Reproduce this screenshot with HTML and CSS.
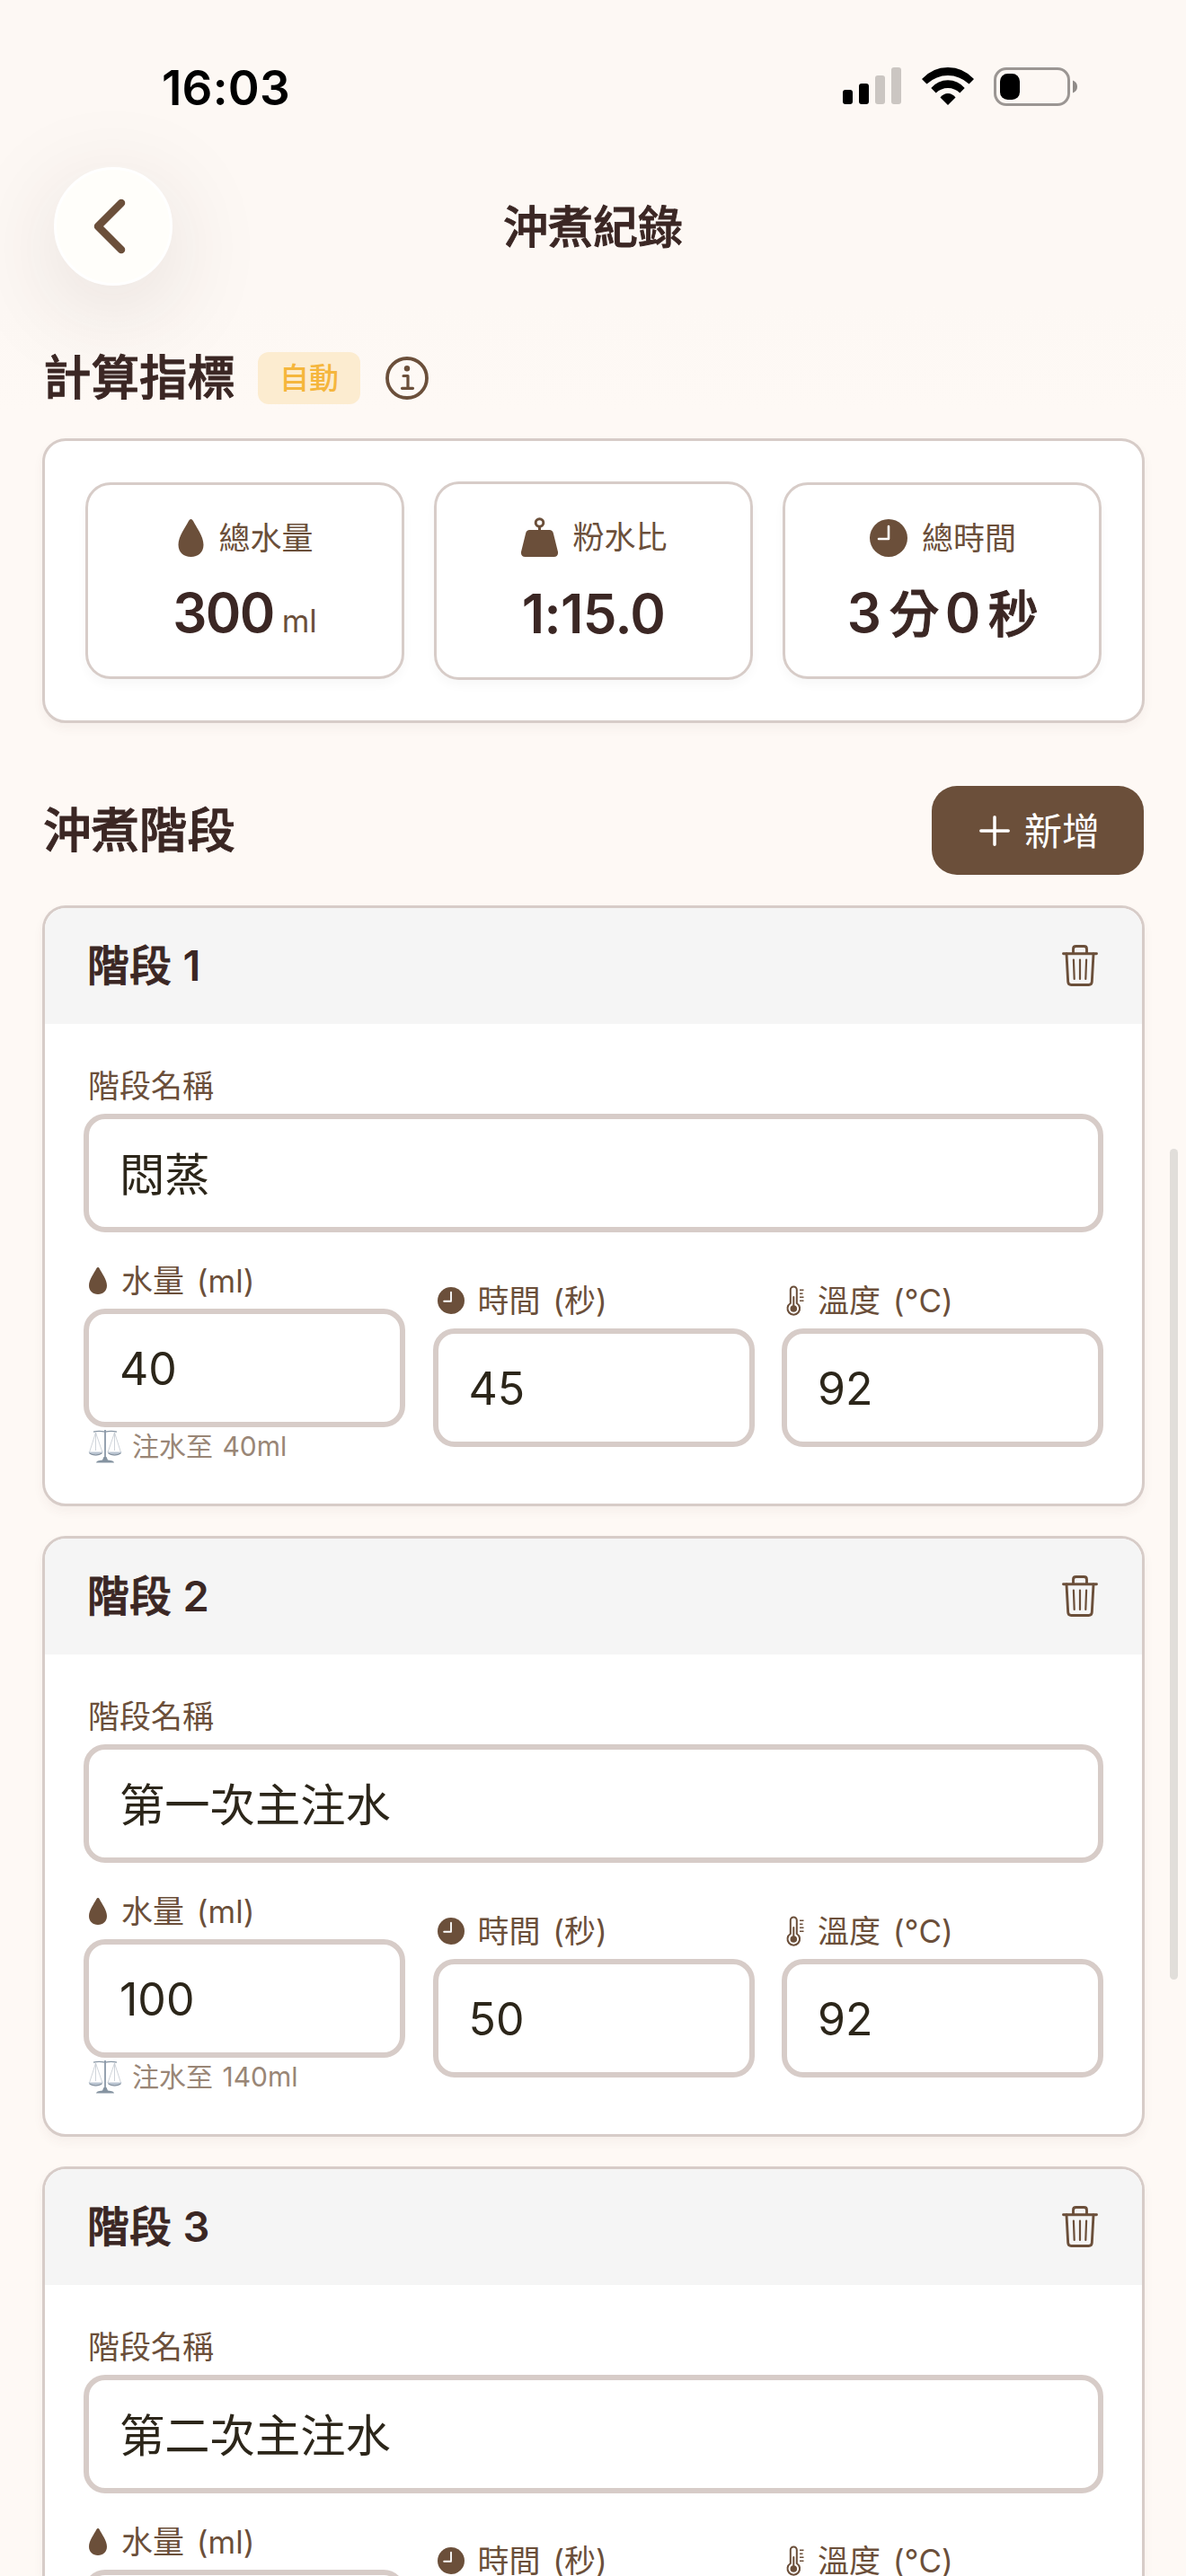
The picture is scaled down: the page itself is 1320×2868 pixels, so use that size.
FILE: index.html
```html
<!DOCTYPE html>
<html lang="zh-Hant">
<head>
    <meta charset="UTF-8">
    <meta name="viewport" content="width=device-width, initial-scale=1.0">
    <title>沖煮紀錄</title>
    <link rel="stylesheet" href="styles.css">
</head>
<body>
    <!-- 共用圖示 -->
    <svg class="sprite" width="0" height="0">
        <symbol id="drop" viewBox="0 0 28 42">
            <path d="M14 0C15 0 15.8 .7 16.5 2C20 9 28 19 28 28.5C28 37 22 42 14 42S0 37 0 28.5C0 19 8 9 11.5 2C12.2 .7 13 0 14 0Z" fill="currentColor"/>
        </symbol>
        <symbol id="weight" viewBox="0 0 41 44">
            <circle cx="20.5" cy="6" r="4.3" fill="none" stroke="currentColor" stroke-width="3"/>
            <path d="M19 10h3v4h9.500Q35 14 35.800 17.500L41 38.500Q41.500 44 36.500 44H4.500Q-.5 44 0 38.500L5.200 17.500Q6 14 9.500 14H19Z" fill="currentColor"/>
        </symbol>
        <symbol id="clock" viewBox="0 0 42 42">
            <circle cx="21" cy="21" r="21" fill="currentColor"/>
            <path d="M21 8V22H10" fill="none" stroke="#fff" stroke-width="2.600" stroke-linecap="round" stroke-linejoin="round"/>
        </symbol>
        <symbol id="thermo" viewBox="0 0 20 34">
            <path d="M4.800 20V5a3.500 3.500 0 0 1 7 0V20a6.800 6.800 0 1 1-7 0Z" fill="none" stroke="currentColor" stroke-width="2"/>
            <circle cx="8.300" cy="26" r="3.800" fill="currentColor"/>
            <path d="M8.300 13V25" stroke="currentColor" stroke-width="2" stroke-linecap="round"/>
            <path d="M15 5.200H19.500M15 9.200H18.500M15 13.200H19.500M15 17.200H19.500" stroke="currentColor" stroke-width="1.600"/>
        </symbol>
        <symbol id="trash" viewBox="0 0 40 46">
            <g fill="none" stroke="currentColor" stroke-linecap="round" stroke-linejoin="round">
                <path d="M1.500 9.700H38.500M12.500 9V4.500Q12.500 1.500 15.500 1.500H24.500Q27.500 1.500 27.500 4.500V9" stroke-width="2.900"/>
                <path d="M5 10L6.700 41Q6.900 44.500 10.300 44.500H29.700Q33.100 44.500 33.300 41L35 10" stroke-width="2.900"/>
                <path d="M12.900 16.500L13.700 38M20 16.500V38M27.100 16.500L26.300 38" stroke-width="2.200"/>
            </g>
        </symbol>
        <symbol id="scale" viewBox="0 0 38 37">
            <g fill="none" stroke="#c3c9d0" stroke-width=".8">
                <path d="M8.500 3L1.500 25M8.500 3V23M8.500 3L16 25M29.500 3L22 25M29.500 3V23M29.500 3L36.500 25"/>
            </g>
            <path d="M6 2.200Q12 .6 19 2.200Q26 .6 32 2.200" fill="none" stroke="#8795a3" stroke-width="1.300"/>
            <path d="M19 0V32" stroke="#8b98a8" stroke-width="1.800"/>
            <path d="M.5 24.500H16.500Q15 28.500 8.500 28.500T.5 24.500ZM21.500 24.500H37.500Q36 28.500 29.500 28.500T21.500 24.500Z" fill="#b9c4d1"/>
            <path d="M1.500 26Q8.500 30 15.500 26M22.500 26Q29.500 30 36.500 26" fill="none" stroke="#7f8b98" stroke-width="1"/>
            <path d="M17.500 30H20.500L22 33.500Q29 34 29 36.500H9Q9 34 16 33.500Z" fill="#8593a1"/>
        </symbol>
    </svg>

    <header class="status-bar">
        <div class="time">16:03</div>
        <div class="status-icons">
            <svg width="66" height="42" viewBox="0 0 66 42">
                <rect x="0" y="25" width="11" height="16" rx="3"/>
                <rect x="18" y="18" width="11" height="23" rx="3"/>
                <g fill="#cbc6c2">
                    <rect x="36" y="9" width="11" height="32" rx="3"/>
                    <rect x="54" y="0" width="11" height="41" rx="3"/>
                </g>
            </svg>
            <svg width="58" height="42" viewBox="0 0 58 42">
                <path d="M0 13Q12 0 29 0T58 13L52.500 18.500Q42 9 29 9T5.500 18.500Z"/>
                <path d="M10.300 23Q18 14.300 29 14.300T47.700 23L42.300 28.500Q36.500 23 29 23T15.700 28.500Z"/>
                <path d="M20.500 33.500Q24 29 29 29T37.500 33.500L29 42Z"/>
            </svg>
            <svg width="94" height="44" viewBox="0 0 94 44">
                <rect x="1.500" y="1.500" width="82" height="40" rx="12.500" fill="none" stroke="#9b9693" stroke-width="3"/>
                <rect x="7" y="7" width="22" height="29" rx="8.500"/>
                <path d="M88 14.500Q93 16.500 93 21.500T88 28.500Z" fill="#8f8b88"/>
            </svg>
        </div>
    </header>

    <nav class="nav-bar">
        <div class="back-btn">
            <svg width="36" height="62" viewBox="0 0 36 62">
                <path d="M31 5L5 31L31 57" fill="none" stroke="currentColor" stroke-width="8.500" stroke-linecap="round" stroke-linejoin="round"/>
            </svg>
        </div>
        <div class="nav-title">沖煮紀錄</div>
    </nav>

    <main>
        <div class="section-head">
            <h2>計算指標</h2>
            <span class="badge">自動</span>
            <svg width="48" height="48" viewBox="0 0 48 48">
                <circle cx="24" cy="24" r="22" fill="none" stroke="currentColor" stroke-width="3.800"/>
                <circle cx="24" cy="13.200" r="3.200" fill="currentColor"/>
                <path d="M20 21.500H25V35M18.500 35.300H30.500" fill="none" stroke="currentColor" stroke-width="3.200" stroke-linecap="round" stroke-linejoin="round"/>
            </svg>
        </div>

        <div class="metrics">
            <div class="metric">
                <div class="metric-label"><svg width="29" height="42"><use href="#drop"/></svg>總水量</div>
                <div class="metric-value">300<small>ml</small></div>
            </div>
            <div class="metric tall">
                <div class="metric-label"><svg width="41" height="44"><use href="#weight"/></svg>粉水比</div>
                <div class="metric-value ratio">1:15.0</div>
            </div>
            <div class="metric">
                <div class="metric-label"><svg width="42" height="42"><use href="#clock"/></svg>總時間</div>
                <div class="metric-value">3<b>分</b>0<b>秒</b></div>
            </div>
        </div>

        <div class="stage-head">
            <h2>沖煮階段</h2>
            <div class="add-btn">
                <svg width="34" height="34" viewBox="0 0 34 34">
                    <path d="M17 1.800V32.200M1.800 17H32.200" stroke="#fff" stroke-width="3.500" stroke-linecap="round"/>
                </svg>
                <span>新增</span>
            </div>
        </div>

        <section class="stage">
            <div class="stage-title"><h3>階段 <b>1</b></h3><svg width="40" height="46"><use href="#trash"/></svg></div>
            <div class="stage-body">
                <div class="label">階段名稱</div>
                <div class="field name">悶蒸</div>
                <div class="row">
                    <div class="col">
                        <div class="label"><svg width="22" height="30"><use href="#drop"/></svg>水量 (ml)</div>
                        <div class="field">40</div>
                        <div class="hint"><svg width="38" height="37"><use href="#scale"/></svg>注水至 40ml</div>
                    </div>
                    <div class="col">
                        <div class="label"><svg width="30" height="30"><use href="#clock"/></svg>時間 (秒)</div>
                        <div class="field">45</div>
                    </div>
                    <div class="col">
                        <div class="label"><svg width="20" height="34"><use href="#thermo"/></svg>溫度 (°C)</div>
                        <div class="field">92</div>
                    </div>
                </div>
            </div>
        </section>

        <section class="stage">
            <div class="stage-title"><h3>階段 <b>2</b></h3><svg width="40" height="46"><use href="#trash"/></svg></div>
            <div class="stage-body">
                <div class="label">階段名稱</div>
                <div class="field name">第一次主注水</div>
                <div class="row">
                    <div class="col">
                        <div class="label"><svg width="22" height="30"><use href="#drop"/></svg>水量 (ml)</div>
                        <div class="field">100</div>
                        <div class="hint"><svg width="38" height="37"><use href="#scale"/></svg>注水至 140ml</div>
                    </div>
                    <div class="col">
                        <div class="label"><svg width="30" height="30"><use href="#clock"/></svg>時間 (秒)</div>
                        <div class="field">50</div>
                    </div>
                    <div class="col">
                        <div class="label"><svg width="20" height="34"><use href="#thermo"/></svg>溫度 (°C)</div>
                        <div class="field">92</div>
                    </div>
                </div>
            </div>
        </section>

        <section class="stage last">
            <div class="stage-title"><h3>階段 <b>3</b></h3><svg width="40" height="46"><use href="#trash"/></svg></div>
            <div class="stage-body">
                <div class="label">階段名稱</div>
                <div class="field name">第二次主注水</div>
                <div class="row">
                    <div class="col">
                        <div class="label"><svg width="22" height="30"><use href="#drop"/></svg>水量 (ml)</div>
                        <div class="field"></div>
                    </div>
                    <div class="col lower">
                        <div class="label"><svg width="30" height="30"><use href="#clock"/></svg>時間 (秒)</div>
                    </div>
                    <div class="col lower">
                        <div class="label"><svg width="20" height="34"><use href="#thermo"/></svg>溫度 (°C)</div>
                    </div>
                </div>
            </div>
        </section>
    </main>

    <div class="scrollbar"></div>
</body>
</html>
```
FILE: styles.css
```css
* {
    box-sizing: border-box;
}

html {
    height: 2868px;
    overflow: hidden;
}

body {
    margin: 0;
    height: 2868px;
    overflow: hidden;
    position: relative;
    display: flex;
    flex-direction: column;
    background: linear-gradient(#fdf8f4 340px, #fef9f5 460px);
    color: #6b4f3a;
    font-family: Inter, "Noto Sans CJK TC", sans-serif;
}

svg {
    display: block;
    flex: none;
}

.sprite {
    position: absolute;
}

h2, h3 {
    margin: 0;
    color: #3b2724;
    font-weight: 500;
    -webkit-text-stroke: 0.9px #3b2724;
}

.status-bar {
    flex: none;
    height: 186px;
    padding: 75px 120px 0 180px;
    display: flex;
    justify-content: space-between;
    align-items: flex-start;
    color: #000;
}

.time {
    font-size: 53px;
    font-weight: 600;
    line-height: 47px;
    letter-spacing: 0.2px;
}

.status-icons {
    display: flex;
    gap: 22px;
}

.nav-bar {
    flex: none;
    height: 132px;
    padding: 0 60px;
    display: grid;
    grid-template-columns: 132px 1fr 132px;
    align-items: center;
}

.back-btn {
    width: 132px;
    height: 132px;
    display: flex;
    justify-content: center;
    align-items: center;
    padding-right: 9px;
    border: 3px solid #fff;
    border-radius: 50%;
    background-color: #fffefa;
    box-shadow: 0 24px 110px rgba(60, 40, 40, 0.13);
}

.nav-title {
    padding-top: 2px;
    font-size: 50px;
    font-weight: 500;
    line-height: 60px;
    color: #3b2724;
    text-align: center;
    -webkit-text-stroke: 0.9px #3b2724;
}

main {
    flex: 1;
    min-height: 0;
    overflow: hidden;
    padding: 74px 46px 0 47px;
}

.section-head {
    display: flex;
    align-items: center;
    height: 58px;
}

h2 {
    padding-left: 1px;
    font-size: 53.5px;
    line-height: 58px;
}

.badge {
    margin: 0 28px 0 25px;
    padding: 0 24px;
    border-radius: 12px;
    background-color: #fcecd0;
    color: #f5b63d;
    font-size: 33px;
    font-weight: 500;
    line-height: 58px;
}

.metrics {
    height: 317px;
    margin-top: 38px;
    padding: 0 45px;
    display: grid;
    grid-template-columns: repeat(3, 355px);
    justify-content: space-between;
    align-items: center;
    border: 3px solid #d7ccc8;
    border-radius: 26px;
    background-color: #fff;
    box-shadow: 0 6px 12px rgba(107, 60, 60, 0.05);
}

.metric {
    height: 219px;
    border: 3px solid #d7ccc8;
    border-radius: 28px;
    box-shadow: 0 6px 12px rgba(0, 0, 0, 0.03);
    padding-top: 36px;
}

.metric.tall {
    height: 221px;
}

.metric-label {
    height: 46px;
    padding-left: 2px;
    display: flex;
    justify-content: center;
    align-items: center;
    gap: 16px;
    font-size: 35px;
    line-height: 46px;
}

.metric-value {
    margin-top: 22px;
    text-align: center;
    color: #3b2724;
    font-size: 60px;
    font-weight: 600;
    line-height: 76px;
    letter-spacing: -1.6px;
}

.metric-value.ratio {
    margin-top: 24px;
    letter-spacing: -0.6px;
}

.metric-value small {
    margin-left: 9px;
    color: #6b4f3a;
    font-size: 35px;
    font-weight: 400;
    letter-spacing: 0;
}

.metric-value b {
    font-size: 56px;
    font-weight: 500;
    margin: 0 8px 0 10px;
    -webkit-text-stroke: 0.9px #3b2724;
}

.metric-value b:last-child {
    margin-right: 0;
}

.stage-head {
    height: 99px;
    margin: 70px 1px 34px 0;
    display: flex;
    justify-content: space-between;
    align-items: center;
}

.add-btn {
    width: 236px;
    height: 99px;
    padding-left: 4px;
    display: flex;
    justify-content: center;
    align-items: center;
    gap: 16px;
    border-radius: 28px;
    background-color: #6b4f3a;
    color: #fff;
    font-size: 42px;
}

.add-btn span {
    padding-bottom: 4px;
}

.stage {
    height: 669px;
    margin-bottom: 33px;
    border: 3px solid #d7ccc8;
    border-radius: 26px;
    background-color: #fff;
    box-shadow: 0 6px 12px rgba(107, 60, 60, 0.05);
    overflow: hidden;
}

.stage.last {
    height: 456px;
    margin-bottom: 0;
    border-bottom: 0;
    border-radius: 26px 26px 0 0;
}

.stage-title {
    height: 129px;
    padding: 0 49px 1px 47px;
    display: flex;
    justify-content: space-between;
    align-items: center;
    background-color: #f5f5f5;
}

h3 {
    font-size: 47px;
    line-height: 60px;
}

h3 b {
    font-weight: 600;
    -webkit-text-stroke: 0;
}

.stage-body {
    padding: 43px;
}

.label {
    height: 54px;
    margin-bottom: 3px;
    padding: 0 0 2px 5px;
    display: flex;
    align-items: center;
    gap: 15px;
    font-size: 35px;
    line-height: 52px;
    word-spacing: 4px;
}

.field {
    height: 132px;
    padding-left: 34px;
    border: 6px solid #d7ccc8;
    border-radius: 24px;
    background-color: #fff;
    color: #2c261a;
    font-size: 50px;
    line-height: 122px;
}

.name {
    font-size: 50.3px;
    line-height: 124px;
}

.row {
    margin-top: 28px;
    display: grid;
    grid-template-columns: repeat(3, 358px);
    justify-content: space-between;
    align-items: center;
}

.last .row {
    align-items: start;
}

.last .lower {
    padding-top: 21px;
}

.hint {
    height: 43px;
    padding-left: 5px;
    display: flex;
    align-items: center;
    gap: 11px;
    color: #998676;
    font-size: 30px;
    line-height: 43px;
    word-spacing: 2px;
}

.scrollbar {
    position: absolute;
    top: 1279px;
    right: 9px;
    width: 9px;
    height: 925px;
    border-radius: 5px;
    background-color: #e1deda;
}
```
